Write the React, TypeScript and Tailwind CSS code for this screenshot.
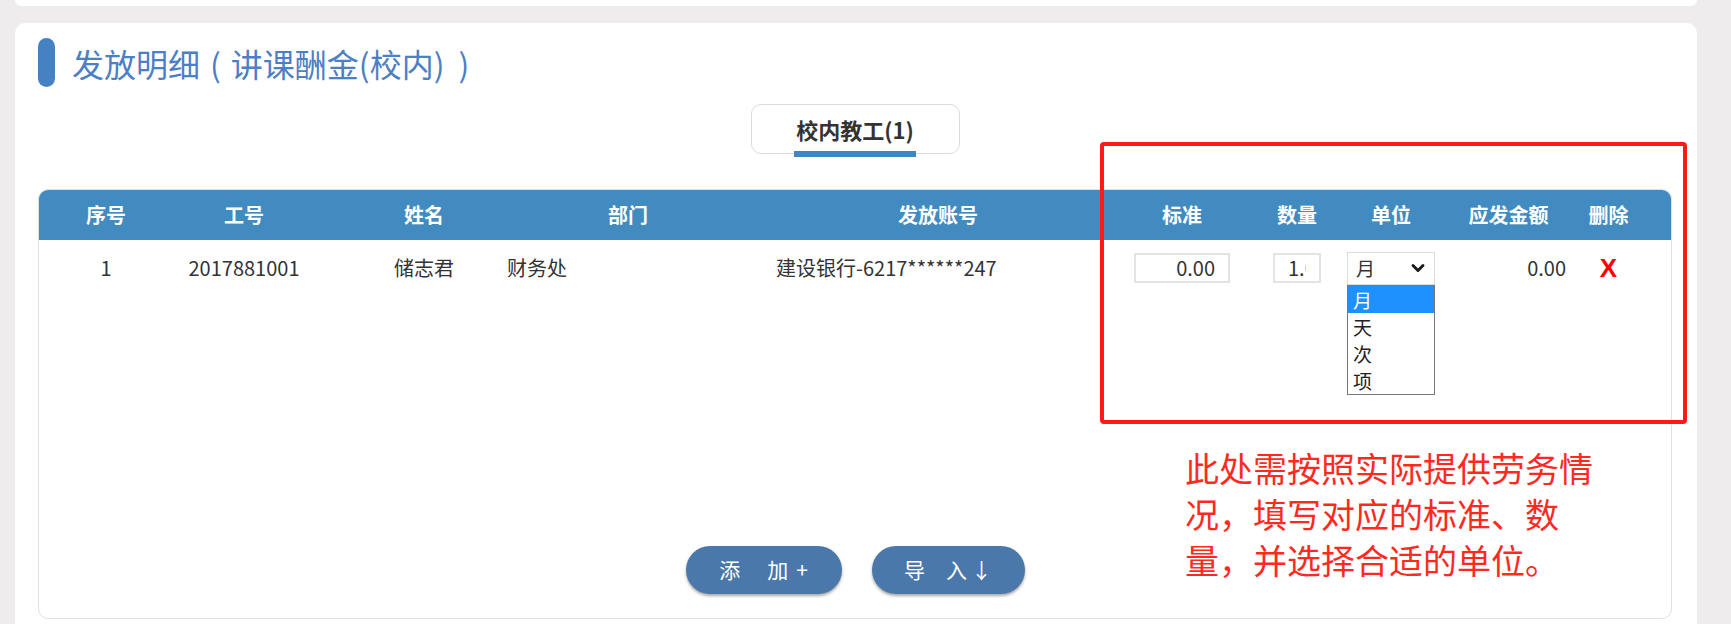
import { ChevronDown } from "lucide-react";

const grid =
  "grid grid-cols-[134px_142px_176px_232px_408px_102px_108px_100px_135px_65px_1fr]";

const units = ["月", "天", "次", "项"];

function HeaderRow() {
  return (
    <div className={`${grid} h-[50px] items-center bg-[#418bc0] text-[20px] font-bold text-white`}>
      <div className="text-center">序号</div>
      <div className="text-center">工号</div>
      <div className="pl-[42px] text-center">姓名</div>
      <div className="pl-[42px] text-center">部门</div>
      <div className="pl-[22px] text-center">发放账号</div>
      <div className="text-center">标准</div>
      <div className="pl-[20px] text-center">数量</div>
      <div className="text-center">单位</div>
      <div className="text-center">应发金额</div>
      <div className="text-center">删除</div>
      <div />
    </div>
  );
}

function BodyRow() {
  return (
    <div className={`${grid} h-[56px] items-center text-[20px] text-[#333]`}>
      <div className="text-center">1</div>
      <div className="text-center">2017881001</div>
      <div className="pl-[42px] text-center">储志君</div>
      <div className="pl-[16px]">财务处</div>
      <div className="pl-[53px]">建设银行-6217******247</div>
      <div className="flex justify-center">
        <input
          readOnly
          value="0.00"
          className="h-[30px] w-[96px] border-2 border-[#e3e3e3] px-[13px] text-right text-[20px] text-[#333] outline-none"
        />
      </div>
      <div className="flex justify-center pl-[20px]">
        <input
          readOnly
          value="1.00"
          className="h-[30px] w-[48px] border-2 border-[#e3e3e3] px-[13px] text-right text-[20px] text-[#333] outline-none"
        />
      </div>
      <div className="flex justify-center">
        <div className="relative w-[88px]">
          <div className="flex h-[33px] items-center justify-between border border-[#dcdcdc] pl-[8px] pr-[6px] text-[19px]">
            <span>月</span>
            <ChevronDown size={20} strokeWidth={3.5} className="text-[#1a1a1a]" />
          </div>
          <div className="absolute left-0 top-full w-full border border-[#777] bg-white text-[19px] leading-[27px]">
            {units.map((u, i) => (
              <div
                key={u}
                className={i === 0 ? "h-[27px] bg-[#1e90ff] pl-[5px] text-white" : "h-[27px] pl-[5px] text-[#222]"}
              >
                {u}
              </div>
            ))}
          </div>
        </div>
      </div>
      <div className="pr-[10px] text-right">0.00</div>
      <div className="text-center font-['Liberation_Sans',sans-serif] text-[26px] font-bold text-[#ff0000]">X</div>
      <div />
    </div>
  );
}

export default function App() {
  return (
    <div className="h-[624px] w-full overflow-hidden bg-[#eeeced] pl-[15px] pr-[34px] font-['Noto_Sans_CJK_SC',sans-serif]">
      <div className="h-[6px] rounded-b-[10px] bg-white" />

      <div className="relative mt-[17px] h-[640px] rounded-[10px] bg-white pl-[23px] pr-[25px] pt-[15px]">
        <div className="flex h-[49px] items-center">
          <div className="h-[49px] w-[17px] rounded-full bg-[#4682c3]" />
          <span className="ml-[17px] text-[32px] leading-none text-[#4d7fc4]">
            发放明细<span className="mx-[10px]">(</span>讲课酬金(校内)<span className="ml-[14px]">)</span>
          </span>
        </div>

        <div className="mt-[17px] flex justify-center">
          <div className="relative flex h-[50px] w-[209px] items-center justify-center rounded-[10px] border border-[#dcdcdc] text-[22px] font-bold text-[#333]">
            校内教工(1)
            <div className="absolute -bottom-[4px] left-[42px] h-[6px] w-[122px] bg-[#3f87be]" />
          </div>
        </div>

        <div className="mt-[35px] flex flex-col overflow-hidden rounded-[10px] border border-[#e0e0e0] pb-[24px]">
          <HeaderRow />
          <div className="min-h-[306px]">
            <BodyRow />
          </div>
          <div className="flex justify-center gap-[30px] text-[21px] text-white">
            <button className="flex h-[48px] w-[156px] items-center justify-center rounded-full bg-[#4a78aa] shadow-[0_2px_3px_rgba(0,0,0,0.35)]">
              <span>添</span>
              <span className="ml-[27px]">加</span>
              <span className="ml-[8px]">+</span>
            </button>
            <button className="flex h-[48px] w-[153px] items-center justify-center rounded-full bg-[#4a78aa] shadow-[0_2px_3px_rgba(0,0,0,0.35)]">
              <span>导</span>
              <span className="ml-[21px]">入</span>
              <span className="ml-[4px]">↓</span>
            </button>
          </div>
        </div>

        <div className="absolute left-[1085px] top-[119px] h-[282px] w-[587px] rounded-[4px] border-4 border-[#ff1a1a]" />

        <div className="absolute left-[1170px] top-[422px] text-[34px] leading-[46px] text-[#ff2a1f]">
          此处需按照实际提供劳务情
          <br />
          况，填写对应的标准、数
          <br />
          量，并选择合适的单位。
        </div>
      </div>
    </div>
  );
}
